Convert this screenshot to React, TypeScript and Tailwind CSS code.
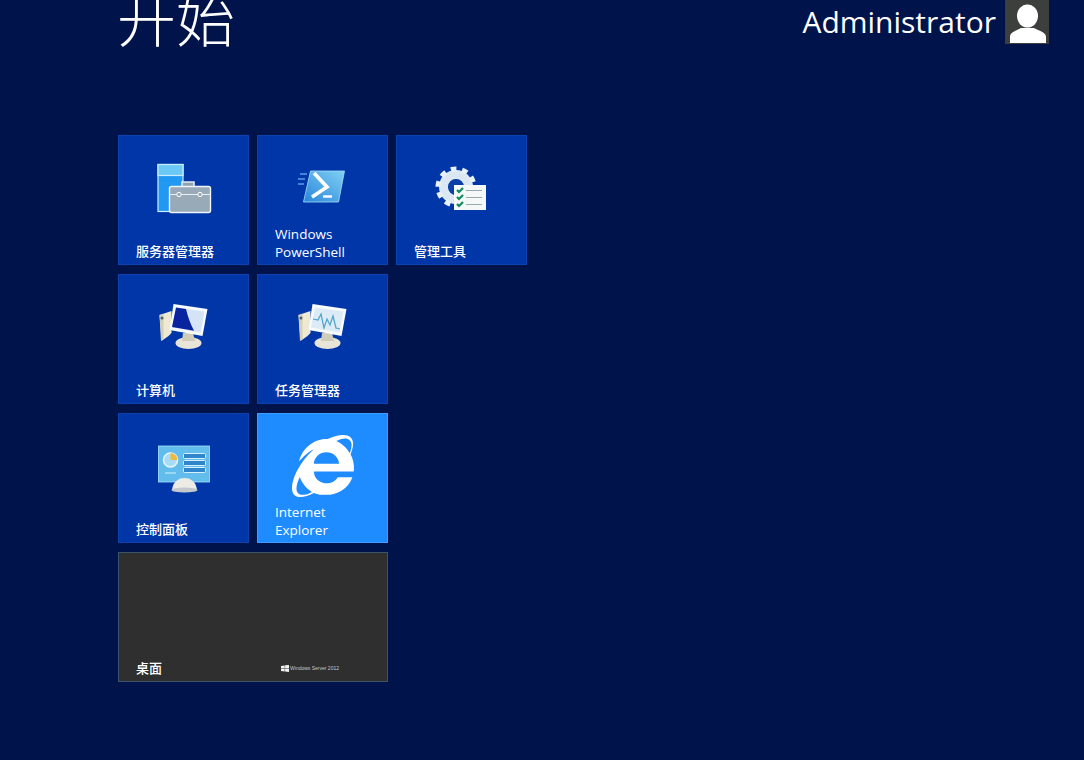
import React from 'react';
import { FaInternetExplorer } from 'react-icons/fa';

const cjk = "font-['Open_Sans','Noto_Sans_CJK_SC',sans-serif]";

const ServerManagerIcon = () => (
  <svg width="64" height="64" viewBox="0 0 64 64">
    <rect x="6" y="8.5" width="25" height="47" fill="#2199f2" stroke="#c8eeff" strokeWidth="1.2" />
    <rect x="6" y="8.5" width="25" height="11" fill="#6cc8f5" stroke="#c8eeff" strokeWidth="1.2" />
    <path d="M30 31v-5h12v5" fill="#8fa2b2" stroke="#e2eaf0" strokeWidth="1.6" />
    <rect x="17.5" y="30.5" width="41" height="26" rx="2" fill="#98a9b8" stroke="#eef4f8" strokeWidth="1.4" />
    <path d="M18 38.5h40" stroke="#e8f0f5" strokeWidth="1.2" />
    <circle cx="27" cy="38.5" r="2.2" fill="#98a9b8" stroke="#fff" />
    <circle cx="48" cy="38.5" r="2.2" fill="#98a9b8" stroke="#fff" />
  </svg>
);

const PowerShellIcon = () => (
  <svg width="64" height="64" viewBox="0 0 64 64">
    <defs>
      <linearGradient id="ps" x1="0" y1="1" x2="1" y2="0">
        <stop offset="0" stopColor="#2a86d8" />
        <stop offset="1" stopColor="#7fd0f5" />
      </linearGradient>
    </defs>
    <path d="M16 18H9M14 23H7M13 28H7" stroke="#3f86d8" strokeWidth="2" />
    <path d="M19.5 15h34l-6 31h-35z" fill="url(#ps)" stroke="#a6def8" strokeWidth="0.8" />
    <path d="M23 17l13 14-15 10" fill="none" stroke="#fff" strokeWidth="3.6" />
    <path d="M32 40.5h9" stroke="#fff" strokeWidth="2.4" />
  </svg>
);

const AdminToolsIcon = () => (
  <svg width="64" height="64" viewBox="0 0 64 64">
    <circle cx="26" cy="31" r="12.5" fill="none" stroke="#dbe8f4" strokeWidth="9" />
    <circle cx="26" cy="31" r="18" fill="none" stroke="#e9f1f8" strokeWidth="5" strokeDasharray="5.6 5.7" />
    <circle cx="26" cy="31" r="7.5" fill="#0b3fa8" />
    <rect x="24" y="29" width="32" height="25" fill="#f4f8f6" />
    <path d="M27 34l2 2 4-4M27 41l2 2 4-4M27 48l2 2 4-4" fill="none" stroke="#0f8a5f" strokeWidth="2.2" />
    <path d="M36 34.5h16M36 41.5h16M36 48.5h16" stroke="#9aa8ac" strokeWidth="1.2" />
  </svg>
);

// shared old-style monitor with tower behind it, screen differs per tile
const MonitorIcon = ({ kind }: { kind: 'computer' | 'task' }) => (
  <svg width="64" height="64" viewBox="0 0 64 64">
    <path d="M7.5 20l12-4v22l-3 3-7 5z" fill="#eee9d2" />
    <path d="M7.5 20l4-1.3v25L9 46z" fill="#d3cfb8" />
    <circle cx="10" cy="23" r="1.5" fill="#4d5f64" />
    <ellipse cx="36.5" cy="48" rx="13" ry="6" fill="#e8e5d8" />
    <path d="M31 38h10l2 8H30z" fill="#cfccb8" />
    <path d="M21.5 9l34 5-5 27-33-6z" fill="#f6fbfd" />
    <path d="M24 12.5l28.5 4-4 21-28.500-5z" fill={kind === 'computer' ? '#d4e4f6' : '#dcebf5'} />
    {kind === 'computer' ? (
      <path d="M24 12.5l10 1.4c2 8 4 14 8 21.800l-22-3.700z" fill="#0a239f" />
    ) : (
      <path d="M22 24l5 1 3-6 3 14 3-9 3 6 3-9 3 12 4 1" fill="none" stroke="#4da3c8" strokeWidth="1.2" />
    )}
  </svg>
);

const ControlPanelIcon = () => (
  <svg width="64" height="64" viewBox="0 0 64 64">
    <rect x="6.5" y="12" width="51" height="36" fill="#62bdec" stroke="#a9e0f8" strokeWidth="0.8" />
    <circle cx="18.5" cy="26" r="7" fill="#a8dcf5" stroke="#e6f6ff" strokeWidth="1.5" />
    <path d="M18.5 26v-7a7 7 0 0 1 7 7z" fill="#f0b840" />
    <path d="M13 39h11" stroke="#bfe8fb" strokeWidth="1.2" />
    <g fill="#2f86cc" stroke="#d5f1ff" strokeWidth="1">
      <rect x="31.5" y="19.5" width="22" height="5" rx="1" />
      <rect x="31.5" y="26.5" width="22" height="5" rx="1" />
      <rect x="31.5" y="33.5" width="22" height="5" rx="1" />
    </g>
    <path d="M20 56c1-9 7-12 12.5-12S44 47 45 56z" fill="#ecebe6" />
    <ellipse cx="32.5" cy="56" rx="13" ry="2.5" fill="#c4c8cc" />
  </svg>
);

const UserIcon = () => (
  <svg width="44" height="44" viewBox="0 0 44 44" fill="#fff">
    <ellipse cx="22.5" cy="16" rx="10.5" ry="11.5" />
    <path d="M5 43v-6c0-5 6-6 11-9h13c5 3 12 4 12 9v6z" />
  </svg>
);

const WinLogo = () => (
  <svg width="8" height="7" viewBox="0 0 8 7" fill="#f2f2f2">
    <path d="M0 1l3.7-.6v2.900H0zM4.100.3L8 0v3.300H4.100zM0 3.700h3.700v2.900L0 6zM4.100 3.700H8V7l-3.900-.5z" />
  </svg>
);

type TileProps = {
  label: string[];
  icon?: React.ReactNode;
  className?: string;
  children?: React.ReactNode;
};

const Tile = ({ label, icon, className, children }: TileProps) => (
  <div className={`flex h-[130px] flex-col border ${className ?? 'border-[#0c42ad] bg-[#0036a8]'}`}>
    <div className="mt-[15px] flex h-[74px] items-center justify-center">{icon}</div>
    <div
      className={`mt-auto flex items-center justify-between pl-[17px] font-medium leading-[18px] text-white ${
        label.length > 1 ? 'pb-[3px] text-[13.5px]' : 'pb-[4px] text-[13px]'
      }`}
    >
      <div>
        {label.map((l) => (
          <div key={l}>{l}</div>
        ))}
      </div>
      {children}
    </div>
  </div>
);

export default function App() {
  return (
    <div className={`h-[760px] w-[1084px] overflow-hidden bg-[#00134a] ${cjk}`}>
      <div className="flex h-[135px] items-start justify-between pl-[117px] pr-[35px]">
        <div className="mt-[-21px] text-[59px] font-light leading-[80px] text-white">开始</div>
        <div className="flex items-start gap-[9px]">
          <div className="mt-[2px] text-[30px] leading-[40px] text-white">Administrator</div>
          <div className="h-[44px] w-[44px] overflow-hidden bg-[#3d3f3c]">
            <UserIcon />
          </div>
        </div>
      </div>
      <div className="ml-[118px] grid w-[409px] grid-cols-[131px_131px_131px] gap-x-[8px] gap-y-[9px]">
        <Tile label={['服务器管理器']} icon={<ServerManagerIcon />} />
        <Tile label={['Windows', 'PowerShell']} icon={<PowerShellIcon />} />
        <Tile label={['管理工具']} icon={<AdminToolsIcon />} />
        <Tile label={['计算机']} icon={<MonitorIcon kind="computer" />} />
        <Tile label={['任务管理器']} icon={<MonitorIcon kind="task" />} />
        <div />
        <Tile label={['控制面板']} icon={<ControlPanelIcon />} />
        <Tile
          label={['Internet', 'Explorer']}
          icon={<FaInternetExplorer className="h-[62px] w-[62px] text-white" />}
          className="border-[#3f9bff] bg-[#1e8bff]"
        />
        <div />
        <Tile label={['桌面']} className="col-span-2 border-[#3c5468] bg-[#2f2f2f]">
          <div className="flex items-center gap-[1px] pr-[48px] font-['Liberation_Sans',sans-serif] text-[5px] font-normal leading-none text-[#c8c8c8]">
            <WinLogo />
            <span>Windows Server 2012</span>
          </div>
        </Tile>
      </div>
    </div>
  );
}
